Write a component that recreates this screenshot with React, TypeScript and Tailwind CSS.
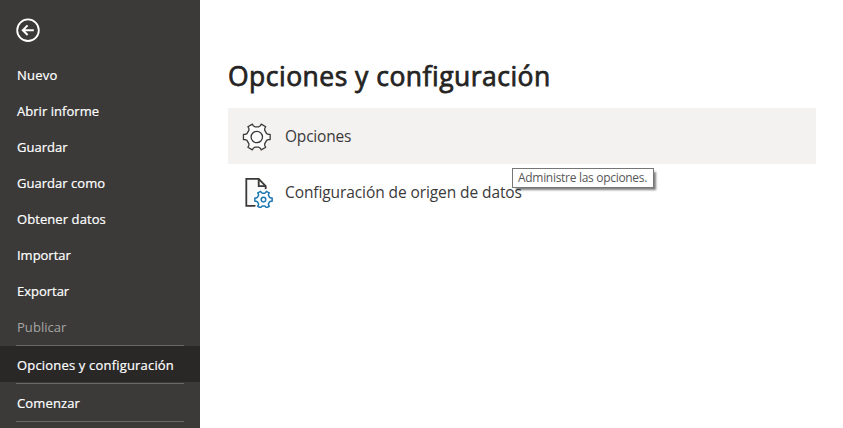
const FONT = 'font-["Open_Sans","Noto_Sans",sans-serif]';

type MenuItem = { label: string; tone?: 'active' | 'disabled'; ruled?: boolean; fit: string };

const menu: MenuItem[] = [
  { label: 'Nuevo', fit: 'tracking-[0.25px]' },
  { label: 'Abrir informe', fit: 'tracking-[0.04px]' },
  { label: 'Guardar', fit: 'tracking-[0px]' },
  { label: 'Guardar como', fit: 'tracking-[0.03px]' },
  { label: 'Obtener datos', fit: 'tracking-[0.08px]' },
  { label: 'Importar', fit: 'tracking-[-0.02px]' },
  { label: 'Exportar', fit: 'tracking-[-0.02px]' },
  { label: 'Publicar', tone: 'disabled', ruled: true, fit: 'tracking-[0.05px]' },
  { label: 'Opciones y configuración', tone: 'active', ruled: true, fit: 'tracking-[0.18px]' },
  { label: 'Comenzar', ruled: true, fit: 'tracking-[0.14px]' },
];

// Outline of a six-toothed gear centred on the origin.
function gearPath(tip: number, base: number) {
  const points: string[] = [];
  for (let tooth = 0; tooth < 6; tooth++) {
    const corners: [number, number][] = [
      [base, -19],
      [tip * 0.87, -12.5],
      [tip, -11],
      [tip, 11],
      [tip * 0.87, 12.5],
      [base, 19],
    ];
    for (const [r, deg] of corners) {
      const a = ((tooth * 60 + deg) * Math.PI) / 180;
      points.push(`${(r * Math.cos(a)).toFixed(2)} ${(r * Math.sin(a)).toFixed(2)}`);
    }
  }
  return `M${points.join('L')}Z`;
}

function BackIcon() {
  return (
    <svg className="block h-6 w-6" viewBox="0 0 24 24" fill="none" stroke="#fff" strokeWidth="1.8">
      <circle cx="12" cy="12.2" r="10.8" />
      <path d="M17.8 12.2H7M11.6 7.4 6.8 12.2l4.8 4.8" strokeWidth="2" />
    </svg>
  );
}

function GearIcon() {
  return (
    <svg className="block h-8 w-8" viewBox="-15.8 -17 32 32" fill="#fbfbfb" stroke="#3b3a39" strokeWidth="1.3" strokeLinejoin="round">
      <path d={gearPath(13.6, 10.4)} />
      <circle r="5.7" />
    </svg>
  );
}

function FileGearIcon() {
  return (
    <svg className="block h-8 w-8" viewBox="0 -1 32 32" fill="none">
      <path d="M5.3 1.8h12.9L25.2 9.4V28.8H5.3Z" fill="#fafafa" />
      <path d="M14.6 28.8H5.3V1.8h12.4l7 7.4v3.4M17.7 1.8v7.4h7" stroke="#3b3a39" strokeWidth="1.8" />
      <g transform="translate(22.5 22.6)" stroke="#1e78b4" strokeWidth="1.5" strokeLinejoin="round" fill="#fff">
        <path d={gearPath(9, 6.5)} stroke="#fff" strokeWidth="4" />
        <path d={gearPath(8.8, 6.5)} />
        <circle r="2.3" />
      </g>
    </svg>
  );
}

export default function App() {
  return (
    <div className={`flex h-[428px] w-[843px] overflow-hidden bg-white ${FONT}`}>
      <nav className="flex w-[200px] shrink-0 flex-col bg-[#3b3a39]">
        <button className="mt-[18px] mb-[14px] ml-4 w-6 shrink-0" aria-label="Volver">
          <BackIcon />
        </button>
        {menu.map(({ label, tone, ruled, fit }) => (
          <div key={label} className="shrink-0">
            <div
              className={`flex h-9 items-center pl-[17px] text-[13px] whitespace-nowrap ${
                tone === 'active'
                  ? 'bg-[#292827] pt-[3px] text-white [-webkit-text-stroke:0.2px]'
                  : tone === 'disabled'
                    ? 'pt-1 text-[#a5a4a3]'
                    : 'pt-1 text-white [-webkit-text-stroke:0.2px]'
              }`}
            >
              <span className={fit}>{label}</span>
            </div>
            {ruled && <div className="mr-4 ml-4 h-0.5 border-b border-[#6a6968]" />}
          </div>
        ))}
      </nav>
      <main className="flex-1 pt-[58px] pl-7">
        <h1 className="h-[50px] text-[26.5px] leading-[37px] font-normal tracking-[0.48px] whitespace-nowrap text-[#252423] [-webkit-text-stroke:0.75px]">
          Opciones y configuración
        </h1>
        <div className="relative flex h-14 w-[588px] items-center bg-[#f3f2f1] pl-[13px]">
          <GearIcon />
          <span className="ml-3 text-[15.5px] leading-6 tracking-[-0.2px] text-[#3b3a39]">Opciones</span>
          <div className="absolute top-[60px] left-[284px] z-10 flex h-5 w-[142px] items-center border border-[#767676] bg-white pl-[5px] text-xs whitespace-nowrap text-[#575757] shadow-[3px_3px_2px_-1px_rgba(0,0,0,0.5)]">
            <span className="tracking-[-0.3px]">Administre las opciones.</span>
          </div>
        </div>
        <div className="flex h-14 w-[588px] items-center pl-[13px]">
          <FileGearIcon />
          <span className="ml-3 text-[15.5px] leading-6 tracking-[-0.09px] text-[#3b3a39]">Configuración de origen de datos</span>
        </div>
      </main>
    </div>
  );
}
